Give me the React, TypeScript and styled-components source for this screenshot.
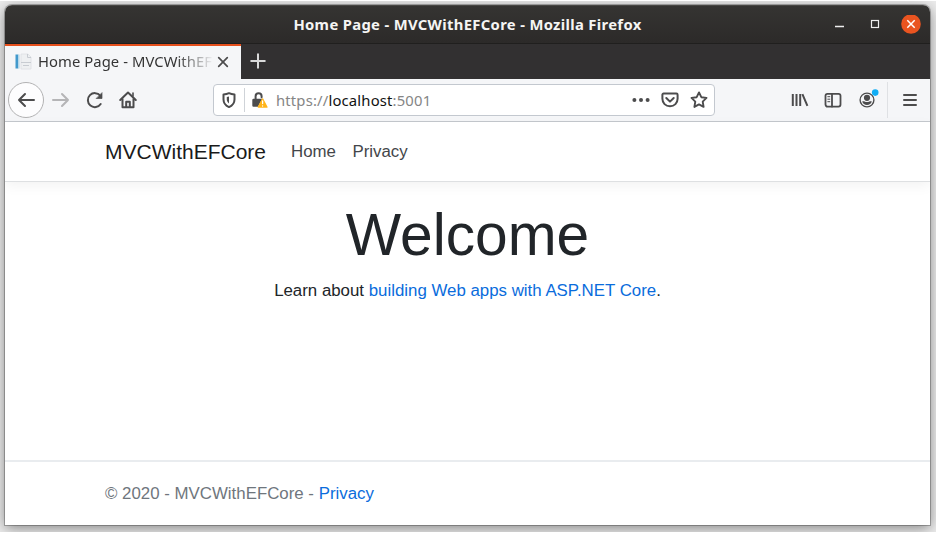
import React from "react";
import styled, { createGlobalStyle } from "styled-components";

const GlobalStyle = createGlobalStyle`
  * { box-sizing: border-box; }
  body { margin: 0; background: #fff; }
  a { color: #0a6cdc; text-decoration: none; }
`;

const uiFont = `"Noto Sans", "Open Sans", sans-serif`;

const Page = styled.div`
  width: 938px;
  height: 534px;
  padding: 1px 2px 2px 0;
  overflow: hidden;
`;

const Desktop = styled.div`
  height: 531px;
  padding: 4px 6px 7px 5px;
  overflow: hidden;
  background: #ececec;
`;

const Window = styled.div`
  display: flex;
  flex-direction: column;
  height: 520px;
  border-radius: 7px 7px 0 0;
  box-shadow: 0 0 0 1px rgba(0, 0, 0, 0.25), 0 3px 14px rgba(0, 0, 0, 0.45);
  background: #fff;
  overflow: hidden;
`;

const TitleBar = styled.header`
  display: grid;
  grid-template-columns: 1fr auto 1fr;
  align-items: center;
  height: 39px;
  flex: none;
  background: linear-gradient(#353432, #2c2a29);
  border-top: 1px solid #484744;
  border-bottom: 1px solid #201f1e;
`;

const Title = styled.div`
  grid-column: 2;
  padding-bottom: 2px;
  font: 700 14.8px/20px ${uiFont};
  letter-spacing: 0.33px;
  color: #f5f5f3;
  white-space: nowrap;
`;

const WindowButtons = styled.div`
  display: flex;
  justify-content: flex-end;
  padding-right: 9px;
`;

const TabStrip = styled.div`
  display: flex;
  height: 35px;
  flex: none;
  background: #323031;
`;

const Tab = styled.div`
  display: flex;
  align-items: center;
  width: 236px;
  padding: 0 12px 2px 10px;
  border-top: 2px solid #e6501d;
  background: #f5f6f8;
`;

const TabLabel = styled.div`
  width: 179px;
  margin-left: 6px;
  padding-bottom: 2px;
  white-space: nowrap;
  font: 14.8px/20px ${uiFont};
  letter-spacing: 0.07px;
  color: #353535;
  mask-image: linear-gradient(to right, #000 138px, transparent 176px);
`;

const NewTab = styled.div`
  display: flex;
  align-items: center;
  padding: 0 0 2px 9px;
`;

const Toolbar = styled.div`
  display: flex;
  align-items: center;
  height: 43px;
  flex: none;
  padding-left: 3px;
  background: #f5f6f8;
  border-bottom: 1px solid #c4c8cd;
`;

const BackButton = styled.div`
  display: grid;
  place-items: center;
  width: 36px;
  height: 36px;
  border: 1px solid #b2b2b3;
  border-radius: 50%;
  background: #fdfdfe;
`;

const ToolSlot = styled.div<{ $gap: number }>`
  display: flex;
  margin-left: ${(p) => p.$gap}px;
`;

const AddressBar = styled.div`
  display: flex;
  align-items: center;
  width: 502px;
  height: 32px;
  margin-left: 75px;
  padding: 0 5px 0 5px;
  border: 1px solid #c3c8cf;
  border-radius: 4px;
  background: #fff;
`;

const Divider = styled.div`
  width: 1px;
  height: 24px;
  margin: 0 5px 0 5px;
  background: #cfd3d8;
`;

const Url = styled.div`
  flex: 1;
  margin-left: 6px;
  font: 14.8px/20px ${uiFont};
  letter-spacing: 0.18px;
  color: #858585;
  strong { font-weight: 400; color: #111; }
`;

const ToolbarDivider = styled.div`
  width: 1px;
  height: 36px;
  margin-left: 8px;
  background: #dfe1e4;
`;

const Site = styled.div`
  display: flex;
  flex-direction: column;
  flex: 1;
  font: 16.85px/24px "Liberation Sans", Arial, sans-serif;
  color: #212529;
`;

const SiteNav = styled.nav`
  display: flex;
  align-items: center;
  height: 60px;
  flex: none;
  padding-left: 100px;
  border-bottom: 1px solid #dee0e2;
  box-shadow: 0 4px 12px rgba(0, 0, 0, 0.05);
`;

const Brand = styled.span`
  width: 186px;
  font-size: 21px;
  color: #1a1a1a;
`;

const NavItem = styled.span`
  margin-right: 16.5px;
  color: #43464a;
`;

const Main = styled.main`
  flex: 1;
  padding-top: 18px;
  text-align: center;
`;

const Heading = styled.h1`
  margin: 0 0 9px;
  font-size: 58.7px;
  line-height: 70px;
  font-weight: 400;
`;

const Intro = styled.p`
  margin: 0;
`;

const Footer = styled.footer`
  height: 65px;
  flex: none;
  padding: 20px 0 0 100px;
  border-top: 2px solid #e9ecef;
  color: #6f767d;
`;

const Icon = ({ size = 20, w = 2, color = "#4c4c4d", children }: {
  size?: number; w?: number; color?: string; children: React.ReactNode;
}) => (
  <svg width={size} height={size} viewBox={`0 0 ${size} ${size}`} fill="none"
    stroke={color} strokeWidth={w} strokeLinecap="round" strokeLinejoin="round">
    {children}
  </svg>
);

export default function App() {
  return (
    <>
      <GlobalStyle />
      <Page>
        <Desktop>
          <Window>
            <TitleBar>
              <span />
              <Title>Home Page - MVCWithEFCore - Mozilla Firefox</Title>
              <WindowButtons>
                <svg width="86" height="20" viewBox="0 0 86 20" fill="none">
                  <path d="M0 11.5h9" stroke="#eee" strokeWidth="1.3" />
                  <rect x="36.5" y="5.5" width="7" height="7" stroke="#eee" strokeWidth="1.2" />
                  <circle cx="76" cy="9" r="9.8" fill="#e95420" />
                  <path d="m72.3 5.3 7.4 7.4m0-7.4-7.4 7.4" stroke="#fff" strokeWidth="1.5" />
                </svg>
              </WindowButtons>
            </TitleBar>
            <TabStrip>
              <Tab>
                <svg width="17" height="17" viewBox="0 0 17 17">
                  <path d="M.5 1.5h3v14h-3z" fill="#4299cc" />
                  <path d="M3.5 1.5h1.5v14H3.5z" fill="#d2e5f0" />
                  <path d="M6 1h7l3 3v12H6z" fill="#eef0f2" stroke="#dde0e3" strokeWidth=".8" />
                  <path d="M12.5 1v3.5H16M6 9.5h10M8 12.5h6" fill="none" stroke="#c8ccd2" />
                </svg>
                <TabLabel>Home Page - MVCWithEF</TabLabel>
                <Icon size={12} w={1.7}><path d="m1.7 1.7 8.6 8.6m0-8.6-8.6 8.6" /></Icon>
              </Tab>
              <NewTab><Icon size={16} w={2} color="#d9d9d9"><path d="M8 1.2v13.6M1.2 8h13.6" /></Icon></NewTab>
            </TabStrip>
            <Toolbar>
              <BackButton><Icon><path d="M18 10H3m6-6-6 6 6 6" /></Icon></BackButton>
              <ToolSlot $gap={7}><Icon color="#b5b5b7"><path d="M2 10h15m-6-6 6 6-6 6" /></Icon></ToolSlot>
              <ToolSlot $gap={14}><Icon><path d="M15.7 14A7 7 0 1 1 15.3 5.7" /><path d="M17 3v5.5h-5.5z" fill="#4c4c4d" strokeWidth=".7" /></Icon></ToolSlot>
              <ToolSlot $gap={13}><Icon><path d="m2.2 10 7.8-7.4 7.8 7.4M4.5 9v8.3h11V9" /><path d="M8.2 17v-5.3h3.6V17" /><path d="M15 3v3" strokeWidth="1.6" /></Icon></ToolSlot>
              <AddressBar>
                <Icon><path d="M10 3.2c2 .9 3.6 1.1 5.5 1.2v5c0 3.5-2 6-5.5 7.7-3.5-1.7-5.5-4.2-5.5-7.7v-5c1.9-.1 3.5-.3 5.5-1.2Z" /><path d="M10 6.5v7c-1.6-1.2-2.2-2.5-2.2-4.3V7.1Z" fill="#4c4c4d" stroke="none" /></Icon>
                <Divider />
                <Icon>
                  <path d="M5.6 9.5V6.2a3 3 0 0 1 6 0v1" strokeWidth="2" />
                  <path d="M3.5 8.7h8.7L8 16.8H3.5a1.2 1.2 0 0 1-1.2-1.2V9.9a1.2 1.2 0 0 1 1.2-1.2Z" fill="#4c4c4d" stroke="none" />
                  <path d="m12.6 9 4.2 8H8.4Z" fill="#ffb41a" stroke="#ffb41a" strokeWidth="1.6" />
                  <path d="M12.6 11v2.6M12.6 15.9v.1" stroke="#fff" strokeWidth="1.3" />
                </Icon>
                <Url>https://<strong>localhost</strong>:5001</Url>
                <Icon><g fill="#4c4c4d" stroke="none"><circle cx="3.4" cy="10" r="2" /><circle cx="10" cy="10" r="2" /><circle cx="16.6" cy="10" r="2" /></g></Icon>
                <ToolSlot $gap={9}><Icon><path d="M3.6 3.6h12.8c.7 0 1.2.5 1.2 1.2v4c0 4.2-3.2 7.5-7.6 7.5s-7.6-3.3-7.6-7.5v-4c0-.7.5-1.2 1.2-1.2Z" /><path d="m6.3 8 3.7 3.6L13.7 8" /></Icon></ToolSlot>
                <ToolSlot $gap={9}><Icon w={1.9}><path d="m10 2.4 2.3 4.8 5.2.7-3.8 3.7.9 5.3-4.6-2.5-4.6 2.5.9-5.3-3.8-3.7 5.2-.7Z" /></Icon></ToolSlot>
              </AddressBar>
              <ToolSlot $gap={75}><Icon><path d="M2.8 4v12M6.5 4v12M10.2 4v12M12.4 4.2l5 11.6" strokeLinecap="butt" /></Icon></ToolSlot>
              <ToolSlot $gap={13}><Icon w={1.8}><rect x="2.5" y="3.8" width="15" height="12.8" rx="2" /><path d="M9 3.8v12.8" /><path d="M4.8 6.7h2M4.8 9.2h2M4.8 11.7h2" strokeWidth="1" /></Icon></ToolSlot>
              <ToolSlot $gap={14}>
                <svg width="22" height="22" viewBox="0 0 22 22" fill="none">
                  <circle cx="10" cy="11" r="6.9" stroke="#4c4c4d" strokeWidth="1.4" />
                  <circle cx="10" cy="8.8" r="3.1" fill="#4c4c4d" />
                  <path d="M5.2 12.5c1.5-.8 3 .5 4.8.5s3.3-1.3 4.8-.5c-.7 2.2-2.4 3.5-4.8 3.5s-4.1-1.3-4.8-3.5Z" fill="#4c4c4d" />
                  <circle cx="18.2" cy="3.6" r="3.3" fill="#10adf5" />
                </svg>
              </ToolSlot>
              <ToolbarDivider />
              <ToolSlot $gap={12}><Icon><path d="M4 5h12M4 10h12M4 15h12" /></Icon></ToolSlot>
            </Toolbar>
            <Site>
              <SiteNav>
                <Brand>MVCWithEFCore</Brand>
                <NavItem>Home</NavItem>
                <NavItem>Privacy</NavItem>
              </SiteNav>
              <Main>
                <Heading>Welcome</Heading>
                <Intro>Learn about <a>building Web apps with ASP.NET Core</a>.</Intro>
              </Main>
              <Footer>© 2020 - MVCWithEFCore - <a>Privacy</a></Footer>
            </Site>
          </Window>
        </Desktop>
      </Page>
    </>
  );
}
